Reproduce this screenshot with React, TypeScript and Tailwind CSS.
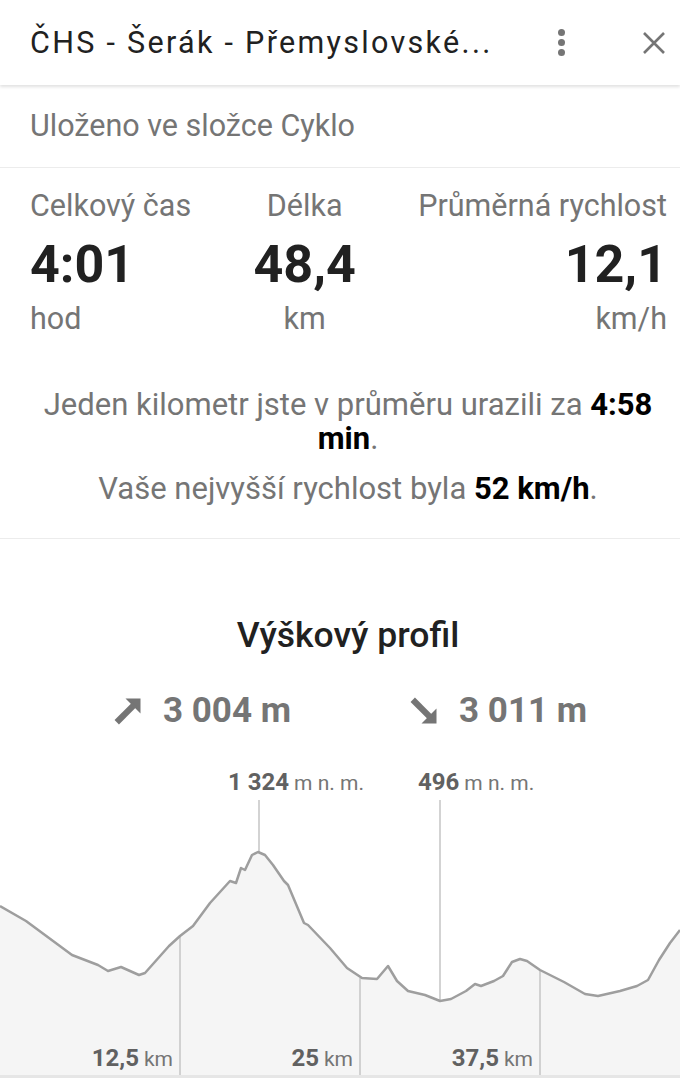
const pts: [number, number][] = [
  [0, 908], [26, 923], [72, 957], [98, 967], [108, 973], [121, 969], [139, 977], [145, 975],
  [169, 948], [180, 938], [193, 928], [210, 905], [230, 883], [236, 885], [241, 870], [245, 872],
  [252, 857], [258, 854], [265, 857], [273, 867], [284, 883], [288, 887], [304, 925], [308, 927],
  [330, 950], [347, 970], [362, 980], [377, 981], [388, 968], [397, 983], [408, 993], [425, 997],
  [440, 1003], [451, 1001], [466, 993], [475, 986], [481, 988], [494, 983], [503, 978], [512, 964],
  [520, 961], [527, 963], [540, 972], [564, 984], [585, 996], [598, 998], [620, 993], [637, 988],
  [648, 982], [659, 962], [670, 945], [680, 932],
]

const line = pts.map((p, i) => (i ? 'L' : 'M') + p[0] + ' ' + p[1]).join(' ')
const area = line + ' L680 1080 L0 1080 Z'

// elevation markers run from the label down to the curve, distance markers from the curve to the bottom
const elev = [
  [259, 854],
  [440, 1003],
]
const dist = [
  [180, 938],
  [360, 980],
  [540, 972],
]

function Stat({ label, value, unit, align }: { label: string; value: string; unit: string; align: string }) {
  return (
    <div className={'flex flex-col ' + align}>
      <div className="text-[30.5px] leading-[32px] text-[#757575]">{label}</div>
      <div className="mt-[13px] text-[52px] leading-[60px] font-bold text-[#212121]">{value}</div>
      <div className="mt-[8px] text-[30.5px] leading-[32px] text-[#757575]">{unit}</div>
    </div>
  )
}

function ArrowUp() {
  return (
    <svg width="30" height="30" viewBox="0 0 24 24" fill="#757575">
      <path d="M10 2H22V14z" />
      <path d="M17.5 6.5L3 21" stroke="#757575" strokeWidth="5" />
    </svg>
  )
}

function ArrowDown() {
  return (
    <svg width="30" height="30" viewBox="0 0 24 24" fill="#757575">
      <path d="M22 10V22H10z" />
      <path d="M17.5 17.5L3 3" stroke="#757575" strokeWidth="5" />
    </svg>
  )
}

function Mark({ v, unit }: { v: string; unit: string }) {
  return (
    <>
      <span className="text-[24px] font-bold text-[#616161]">{v}</span>
      <span className="text-[21px] text-[#757575]">{unit}</span>
    </>
  )
}

export default function App() {
  return (
    <div className="w-[680px] h-[1080px] overflow-hidden bg-white font-['Roboto',sans-serif]">
      <header className="relative z-10 flex h-[85px] items-center pl-[30px] shadow-[0_2px_3px_rgba(0,0,0,0.12)]">
        <h1 className="flex-1 text-[30.5px] tracking-[2.3px] text-[#212121]">ČHS - Šerák - Přemyslovské...</h1>
        <div className="flex w-[14px] flex-col items-center gap-[3px] mr-[74px]">
          <span className="h-[7px] w-[7px] rounded-full bg-[#757575]" />
          <span className="h-[7px] w-[7px] rounded-full bg-[#757575]" />
          <span className="h-[7px] w-[7px] rounded-full bg-[#757575]" />
        </div>
        <svg width="24" height="22" viewBox="0 0 24 22" className="mr-[14px]">
          <path d="M2 1L22 21M22 1L2 21" stroke="#757575" strokeWidth="2.6" />
        </svg>
      </header>

      <div className="flex h-[83px] items-center border-b border-[#ececec] px-[30px] text-[30.5px] text-[#757575]">
        Uloženo ve složce Cyklo
      </div>

      <div className="flex justify-between pl-[30px] pr-[13px] pt-[22px]">
        <Stat label="Celkový čas" value="4:01" unit="hod" align="items-start" />
        <Stat label="Délka" value="48,4" unit="km" align="items-center" />
        <Stat label="Průměrná rychlost" value="12,1" unit="km/h" align="items-end" />
      </div>

      <div className="border-b border-[#ececec] pl-[42px] pr-[26px] pt-[53px] pb-[32px] text-center text-[31px] leading-[34px] text-[#757575]">
        <p>
          Jeden kilometr jste v průměru urazili za <b className="font-bold text-black">4:58</b>{' '}
          <b className="font-bold text-black">min</b>.
        </p>
        <p className="mt-[16px]">
          Vaše nejvyšší rychlost byla <b className="font-bold text-black">52 km/h</b>.
        </p>
      </div>

      <h2 className="mt-[78px] pl-[16px] text-center text-[35.5px] leading-[36px] font-medium text-[#212121]">
        Výškový profil
      </h2>

      <div className="mt-[40px] flex h-[36px] items-center text-[35px] font-bold text-[#757575]">
        <div className="ml-[113px] flex items-center gap-[20px]">
          <ArrowUp />
          <span>3 004 m</span>
        </div>
        <div className="ml-[118px] flex items-center gap-[20px]">
          <ArrowDown />
          <span>3 011 m</span>
        </div>
      </div>

      <div className="relative mt-[29px] h-[320px]">
        <svg width="680" height="320" viewBox="0 760 680 320" className="absolute inset-0">
          <path d={area} fill="#f5f5f5" />
          {elev.map(([x, y]) => (
            <line key={x} x1={x} x2={x} y1={802} y2={y} stroke="#c4c4c4" strokeWidth="1.5" />
          ))}
          {dist.map(([x, y]) => (
            <line key={x} x1={x} x2={x} y1={y} y2={1077} stroke="#c4c4c4" strokeWidth="1.5" />
          ))}
          <path d={line} fill="none" stroke="#9e9e9e" strokeWidth="2.5" strokeLinejoin="round" />
          <rect x="0" y="1077" width="680" height="3" fill="#e6e6e6" />
        </svg>
        <div className="absolute left-[228px] top-[6px] flex items-baseline gap-[5px]">
          <Mark v="1 324" unit="m n. m." />
        </div>
        <div className="absolute left-[418px] top-[6px] flex items-baseline gap-[5px]">
          <Mark v="496" unit="m n. m." />
        </div>
        <div className="absolute right-[507px] top-[282px] flex items-baseline gap-[5px]">
          <Mark v="12,5" unit="km" />
        </div>
        <div className="absolute right-[327px] top-[282px] flex items-baseline gap-[5px]">
          <Mark v="25" unit="km" />
        </div>
        <div className="absolute right-[147px] top-[282px] flex items-baseline gap-[5px]">
          <Mark v="37,5" unit="km" />
        </div>
      </div>
    </div>
  )
}
